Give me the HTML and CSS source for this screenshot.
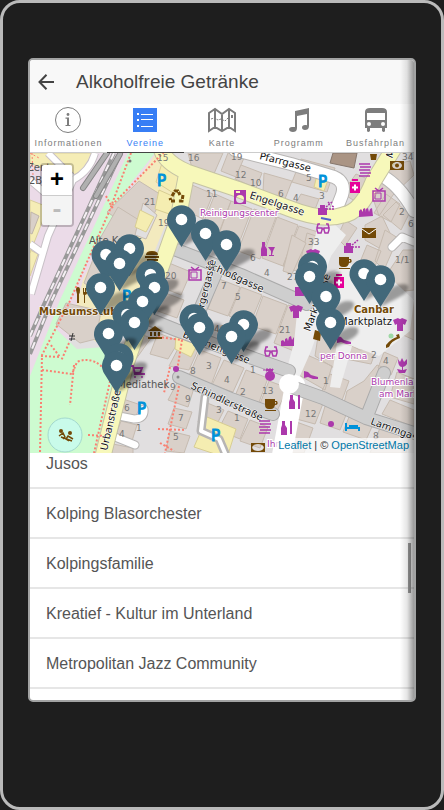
FILE: index.html
```html
<!DOCTYPE html>
<html lang="de">
<head>
<meta charset="utf-8">
<meta name="viewport" content="width=device-width, initial-scale=1">
<title>Alkoholfreie Getränke</title>
<link rel="stylesheet" href="styles.css">
</head>
<body>
<div class="device">
<div class="screen">
<header class="bar">
<button class="back" type="button" aria-label="Zurück"><svg width="16" height="16" viewBox="0 0 16 16"><path d="M8.5 .8L1.5 8l7 7.2M1.5 8H16" fill="none" stroke="#444" stroke-width="2"/></svg></button>
<h1>Alkoholfreie Getränke</h1>
</header>
<nav class="tabs">
<a href="#info"><svg viewBox="0 0 28 28"><circle cx="14" cy="14" r="12.5" fill="none" stroke="currentColor"/><circle cx="14" cy="8.5" r="1.4"/><path d="M11.5 11.5H15V19h1.5v1h-5v-1H13v-6.3h-1.5z"/></svg><span>Informationen</span></a>
<a href="#vereine" class="active"><svg viewBox="0 0 28 28"><path d="M2 2h24v24H2z"/><path d="M6 8h2M6 14h2M6 20h2" stroke="#fff" stroke-width="2"/><path d="M10 8.5h12M10 13.5h12M10 20.5h12" stroke="#fff"/></svg><span>Vereine</span></a>
<a href="#karte"><svg viewBox="0 0 28 28"><path d="M1 7l6-4 7 5 7-5 6 4v18l-6-4-7 4-7-4-6 4zM7 3v18M14 8v17M21 3v18" fill="none" stroke="currentColor" stroke-width="2"/><path d="M3 13l3-1 4 2 3-1 4 2 4-4" fill="none" stroke="currentColor" stroke-dasharray="2 1"/><path d="M23 9h2v3h-2z"/></svg><span>Karte</span></a>
<a href="#programm"><svg viewBox="0 0 28 28"><path d="M10 5l14-3v18c0 3-2 4-4 4-4 0-4-5 0-5 1 0 1.500 0 2 .3V8l-10 2v12c0 3-2 4-4 4-5 0-5-5-1-5h3z"/></svg><span>Programm</span></a>
<a href="#bus"><svg viewBox="0 0 28 28"><path fill-rule="evenodd" d="M8 2h12q5 0 5 4v16h-2v3q-1 2-3 0v-3H8v3q-2 2-3 0v-3H3V6q0-4 5-4zM5 7v7h18V7zM7 16a2 2 0 100 4 2 2 0 000-4zm14 0a2 2 0 100 4 2 2 0 000-4z"/></svg><span>Busfahrplan</span></a>
</nav>
<main>
<section class="map" aria-label="Karte">
<svg class="tiles" viewBox="30 153 384 300" preserveAspectRatio="xMinYMin slice">
<defs>
<filter id="soft" x="-50%" y="-50%" width="200%" height="200%"><feGaussianBlur stdDeviation="1.500"/></filter>
<g id="pin"><path d="M0 27L7 12Q17 1 27 5Q31 11 17 18Z" fill="#000" opacity=".35" filter="url(#soft)"/><path d="M0 27L-12 8A14.500 14.500 0 1 1 12 8Z" fill="#42687a"/><circle cy="-.5" r="5.800" fill="#fff"/></g>
<g id="shirt"><path d="M-7-5l5-2q2 2 4 0l5 2-2 5-2-1v7h-6v-7l-2 1z"/></g>
<g id="cup"><path fill-rule="evenodd" d="M-6-6H4v2h2q2 4-2 4-1 4-4 4h-2q-4 0-4-4zM4-3v2q2-1 1-2zM-6 5H5v1H-6z"/></g>
<g id="tv"><path d="M-6-4H6V6H-6zM-4-7l4 3 4-3" fill="none" stroke="currentColor" stroke-width="1.500"/><path d="M-4-2h6v6h-6z" fill="none" stroke="currentColor"/></g>
<g id="glasses" fill="none" stroke="currentColor" stroke-width="1.500"><path d="M-6 0h5v2l-1 3h-3l-1-3zM1 0h5v2L5 5H2L1 2zM-6 0l1-4h2M6 0L5-4H3M-1 1h2"/></g>
<g id="shoe"><path d="M-7-3l4 1 3 3 7 2v2H2L-3 3-7 4z"/></g>
<g id="bottle"><path d="M-2-7h3v4l2 3v7h-6V0l1-3z"/></g>
<g id="towels" fill="none" stroke="currentColor" stroke-width="1.500"><path d="M-6-6H5M-5-3H6M-6 0H5M-5 3H6M-6 6H5"/></g>
<g id="med"><path d="M-3-7h6v2h-6zM-5-4H5V7H-5z"/><path d="M-3 1.500h6M0-1.500v6" stroke="#fff" stroke-width="2"/></g>
</defs>
<rect x="30" y="153" width="384" height="300" fill="#e1dfe0"/>
<path d="M30 153H160L100 270 30 440z" fill="#ebdbe8"/>
<path d="M30 153h62l-7 16-17 9-38-15z" fill="#f5edb6" stroke="#d8ce9c"/>
<path d="M30 200l18 7-18 46zM30 250l8 4-8 22z" fill="#f5edb6" stroke="#d8ce9c"/>
<path d="M31 212l8 4-7 18-2-1z" fill="#d9d0c9" stroke="#bfb4a9"/>
<path d="M95 153q-5 18-22 27L48 236l-17 58M30 180l28 24M30 244l14 10M48 153l24 24" fill="none" stroke="#c8c1c7" stroke-width="8"/>
<path d="M95 153q-5 18-22 27L48 236l-17 58M30 180l28 24M30 244l14 10M48 153l24 24" fill="none" stroke="#fff" stroke-width="6"/>
<path d="M128 153L60 300 30 376v77h71l24-84-20-22-28 2-21-20 32-69 43-77 24-30z" fill="#cdfbd0"/>
<path d="M121 153L52 300 30 354M114 153L45 302 30 336" fill="none" stroke="#999" stroke-width="4"/>
<path d="M121 153L52 300 30 354M114 153L45 302 30 336" fill="none" stroke="#f4eff3" stroke-width="2" stroke-dasharray="7 6"/>
<path d="M107 153L83 188M120 154l-24 42" stroke="#868686" stroke-width="6" stroke-linecap="round"/>
<path d="M107 153L83 188M120 154l-24 42" stroke="#b0b0b0" stroke-width="4" stroke-linecap="round"/>
<path d="M156 153l-27 40-21 37-25 50-11 44 24 18 20-1 24-54 38-93z" fill="#f3eabe"/>
<g fill="#d9d0c9" stroke="#c6bbb0">
<path d="M139 181l24 15-20 40-36-24z"/><path d="M118 207l24 15-13 33-31-13zM95 254l15 6-18 28-8-5zM56 324l10-21 35 8-5 28-16 4z"/>
<path d="M143 203l14 12-11 24-11-4z" fill="#e1dfe0"/>
<path d="M188 153h35l-10 23-21-8zM228 153h18l-10 24-15-6z"/><path d="M241 165l21 8-6 15-21-9zM264 173l28 8-7 18-22-7zM301 159l34 9-8 24-35-10z"/>
<path d="M192 185l21 9-10 25-18-9zM215 194l16 7-12 33-17-8zM231 201l21 8-16 42-21-8zM254 209l22 8-16 42-22-8zM277 217l21 8-15 41-21-8zM299 226l19 6-14 42-21-8z"/>
<path d="M301 194l18 5-5 13-20-6zM307 233l21 7-10 25-17-6z"/>
<path d="M169 263l22 9-10 23-20-8zM160 291l24 9-7 18-22-8zM219 279l21 8-12 29-20-7zM241 287l21 8-12 29-21-8zM263 296l24 9-11 29-24-8zM288 305l20 7-14 39-20-8z"/>
<path d="M135 332l16 6-15 21-10-5zM158 333l21 8-11 18-18-5zM181 343l17 7-9 20-20-4zM200 350l21 8-11 30-23-8zM224 360l20 8-11 24-21-7zM246 370l22 8-10 27-23-9zM269 381l19 7-12 25-17-7z"/>
<path d="M178 381l16 7-6 19-20-7zM174 408l18 4-6 17-18-5zM170 431l20 5-6 17-18-2zM205 402l19 8-9 18-17-6zM228 411l20 8-8 20-22-9zM250 420l18 7-8 21-20-7z"/>
<path d="M123 399l18 6-7 15-16-3zM121 421l16 4-5 16-17-4zM113 444l20 4v7h-22z"/>
<path d="M356 174l14 6-12 23-16-10zM370 190l11-23 29-6 4 14-21 20-14 21zM374 213l12-19 14 10-9 18zM365 225l17-9 8 17-11 15-14-8zM396 202l13 12-8 16-18-15zM403 250h11v40l-19 2-10-15z"/>
<path d="M292 235l14 8-14 31-9-3zM345 220l12 8-12 18-8-8zM367 245l14 6-9 23-14-7zM385 230l13 8-14 32-9-9z"/>
<path d="M414 300h-12l-10 30 22 10zM319 330l25 12 16 8 17-3-6 17-25-5-4 14-27-17zM305 354l27 12-7 24-28-16zM330 374l19 7-8 22-21-8zM347 391l17-10 13-16 8 3-16 43-25-8zM384 352l14 6-7 17-13-7zM397 372l17 7v25l-24-7zM390 400l24 10v17l-32-13z"/>
<path d="M298 392l26 9-9 23-26-7zM326 403l22 7-8 20-20-7zM351 412l24 8-9 20-23-8zM380 428l29 10-3 15h-36zM291 420l22 8-9 25h-17z"/>
</g>
<path d="M333 153h24l-3 15-24-5z" fill="#aa9484" stroke="#86776d"/>
<path d="M163 160l18 14-3 22-22-14zM159 190l20 9-4 17-20-7zM176 335l22 8-7 14-16-8zM207 417l29 12-9 29-33-11zM317 175l11 5-4 11-10-4zM140 210l14 7-8 15-11-5z" fill="#f5edb1" stroke="#d7cd93"/>
<path d="M300 283l28 19-17 49-15 34-12-6 10-36zM317 229l17-5 12 11-15 21-10 28-16-5zM326 275l24-11 36 10 28 26-4 31-31 25-40-15-18-35zM337 343l15 3-12 42-10-1z" fill="#eee"/>
<g fill="none" stroke-linejoin="round" stroke-linecap="round">
<path d="M235 150l56 14 43 13q12 5 8 18l-7 18M380 175q18 8 34 36M392 247l10-10 12 5M295 385l-13 70M119 416l15 3q11 0 10-10M115 437l20 8M205 397l-4 34 18 8 6 14" stroke="#b7b5b4" stroke-width="9"/>
<path d="M235 150l56 14 43 13q12 5 8 18l-7 18M380 175q18 8 34 36" stroke="#b7b5b4" stroke-width="14"/>
<path d="M235 150l56 14 43 13q12 5 8 18l-7 18M380 175q18 8 34 36" stroke="#fff" stroke-width="12"/><path d="M295 385l-13 70" stroke="#fff" stroke-width="20"/><path d="M392 247l10-10 12 5M119 416l15 3q11 0 10-10M115 437l20 8" stroke="#fff" stroke-width="7"/><path d="M205 397l-4 34 18 8 6 14" stroke="#fff" stroke-width="4"/>
<path d="M174 249l67 26 66 29M136 314l40 16 51 19 62 22M179 377l52 22 42 15M292 387l31 11 43 20 54 17M367 416l17-43M195 321l23-53" stroke="#aaa" stroke-width="14"/>
<path d="M174 249l67 26 66 29M136 314l40 16 51 19 62 22M179 377l52 22 42 15M292 387l31 11 43 20 54 17M367 416l17-43M195 321l23-53" stroke="#cecece" stroke-width="12"/>
<circle cx="289" cy="384" r="10" fill="#fff" stroke="none"/>
<path d="M161 148q3 14 26 24l50 17 51 19q35 14 55 7 18-3 30-33l21-34M187 172l-9 47-18 51-16 42-18 52-24 96" stroke="#c5c3a4" stroke-width="17"/>
<path d="M161 148q3 14 26 24l50 17 51 19q35 14 55 7 18-3 30-33l21-34M187 172l-9 47-18 51-16 42-18 52-24 96" stroke="#f7f8ba" stroke-width="15"/>
</g>
<path d="M131 153l-22 59-40 91-27 52-2 98M106 196l7 13M112 205l53-54M42 370l30 4 5-12q18-8 34 15l-17 76M74 365l-4 40M41 356l19 1-10-13M69 343l-8 18M170 367l-6 26M179 386l-14 67M158 429l28 1M160 443l14 8M158 337l24 3-5 31M88 435l17 1" fill="none" stroke="#fa8072" stroke-width="2" stroke-dasharray="2 2"/>
<circle cx="65" cy="435" r="17" fill="#c9fbea" stroke="#a3d8ce"/>
<path d="M32 153l1 22M30 153l9 5" stroke="#fa8072" stroke-dasharray="2 2"/>
<g class="num">
<text x="157" y="161">15</text><text x="188" y="161">16</text><text x="231" y="160">19</text><text x="235" y="178">12</text><text x="250" y="186">10</text><text x="278" y="197">6</text><text x="206" y="197">11</text><text x="144" y="205">21</text><text x="158" y="226">19</text><text x="250" y="261">6</text><text x="264" y="276">4</text><text x="221" y="289">7</text><text x="235" y="300">5</text><text x="165" y="279">20</text><text x="306" y="181">5</text><text x="319" y="199">3</text><text x="293" y="201">4</text><text x="308" y="245">33</text><text x="287" y="280">27</text><text x="399" y="215">2</text><text x="408" y="227">6</text><text x="395" y="263">1/1</text><text x="402" y="160">34</text><text x="214" y="332">46</text><text x="279" y="333">21</text><text x="206" y="369">3</text><text x="190" y="374">8</text><text x="224" y="383">4</text><text x="250" y="373">1</text><text x="240" y="395">2</text><text x="262" y="394">13</text><text x="185" y="402">9</text><text x="178" y="421">7</text><text x="173" y="440">5</text><text x="216" y="413">3</text><text x="234" y="421">1</text><text x="124" y="411">6</text><text x="119" y="437">4</text><text x="136" y="431">1</text><text x="170" y="390">9</text><text x="305" y="417">12</text><text x="371" y="358">2</text><text x="383" y="364">4</text><text x="323" y="384">1</text><text x="373" y="439">8</text>
</g>
<g class="place">
<text x="27" y="171">Zentrum</text><text x="29" y="184">2B</text><text x="89" y="244">Alte Kelter</text><text x="117" y="388">Mediathek</text>
</g>
<g class="road">
<text transform="translate(259 159) rotate(14)">Pfarrgasse</text><text transform="translate(249 198) rotate(18)">Engelgasse</text><text transform="translate(205 267) rotate(24)">Schloßgasse</text><text transform="translate(182 337) rotate(22)">Brunnengasse</text><text transform="translate(190 388) rotate(25)">Schindlerstraße</text><text transform="translate(370 424) rotate(20)">Lammgasse</text><text transform="translate(107 451) rotate(-77)">Urbanstraße</text><text transform="translate(201 321) rotate(-76)">Bergergasse</text><text transform="translate(310 332) rotate(-70)">Marktstraße</text><text transform="translate(392 159) rotate(-65)">Marktstr.</text><text x="339" y="325">Marktplatz</text>
</g>
<g class="shop"><text x="200" y="216">Reinigungscenter</text><text x="320" y="359">per Donna</text><text x="371" y="385">Blumenlan</text><text x="379" y="397">am Markt</text><text x="267" y="447">Ihr</text></g>
<g class="food"><text x="39" y="315">Museumsstube</text><text x="354" y="313">Canbar</text></g>
<g class="parking"><text x="157" y="186">P</text><text x="318" y="187">P</text><text x="122" y="302">P</text><text x="137" y="414">P</text><text x="211" y="441">P</text></g>
<g fill="#ac39ac" color="#ac39ac">
<path fill-rule="evenodd" d="M234 190h12v14h-12zM236 191v2h4v-2zm4 4a4 4 0 100 8 4 4 0 000-8z"/><use href="#tv" x="195" y="274"/><use href="#tv" x="379" y="195"/><use href="#bottle" x="264" y="249"/><path d="M268 247h7l-2 4-1 4h2v1h-5v-1h2v-4z"/>
<use href="#towels" x="365" y="170"/><use href="#towels" x="265" y="427"/><use href="#glasses" x="323" y="228"/><use href="#glasses" x="271" y="351"/><use href="#shirt" x="296" y="312"/><use href="#shirt" x="400" y="325"/><use href="#shirt" x="313" y="256"/><use href="#shoe" x="344" y="339"/><use href="#shoe" x="311" y="374"/>
<path d="M318 208h9v7h-9zM320 208v-3h5v3M344 246h9v7h-9zM346 246v-3h5v3M359 217v-6l2-2 2 3v-3l2-1 1 4v-3l2-1 1 4 1-3 2-1 1 8zM281 346v-5l2-1 2 2v-3l2-1 1 3 1-4 2-1 1 4 2-3v9zM295 287h9v9h-9z"/>
<path d="M326 207l6-5M326 209l8 0M328 202l2 2M332 206l2 1M352 245l6-5M352 247l8 0" stroke="#ac39ac" stroke-width="1.500" stroke-dasharray="2 1"/>
<circle cx="270" cy="376" r="5"/><path d="M266 369h7v2h-7zM263 370h3" stroke="#ac39ac" stroke-dasharray="2 1"/><circle cx="176" cy="369" r="3"/><circle cx="331" cy="424" r="3"/>
<path d="M130 366h3l2 8h10M133 368h9l-2 5h-6" fill="none" stroke="#ac39ac" stroke-width="2"/><circle cx="135" cy="377" r="1"/><circle cx="142" cy="377" r="1"/>
<use href="#bottle" x="292" y="402"/><path d="M298 395h2v14h-2zM292 421v13h-2v-13z"/><use href="#bottle" x="284" y="428"/>
<path d="M398 359l2 3 2-4 2 4 3-3v5q-2 3-4 3v3l4-1-2 4h-6l-2-4 5 1v-3q-4 0-4-8z"/>
</g>
<g fill="#e6009a"><use href="#med" x="355" y="186"/><use href="#med" x="339" y="281"/></g>
<g fill="#734a08" color="#734a08"><use href="#cup" x="345" y="263"/><use href="#cup" x="271" y="405"/><path d="M370 154h7l-1 6h-5z"/><path fill-rule="evenodd" d="M390 161h14v9h-14zm7 1a5 3.500 0 100 7 5 3.500 0 000-7z"/><circle cx="397" cy="165.500" r="2"/><path d="M362 228h14v10h-14z"/><path d="M362 229l7 5 7-5" fill="none" stroke="#fff"/>
<path fill-rule="evenodd" d="M251 443h14v9h-14zm7 1a5 3 0 100 7 5 3 0 000-7z"/><path d="M146 255q0-4 6-4t6 4zM145 256h14v2h-14zM147 259h11v2h-11z"/><path d="M148 331l7-5 7 5zM150 332h2v4h-2zM154 332h2v4h-2zM158 332h2v4h-2zM148 337h14v2h-14z"/>
<path d="M76 290q0-3 2-3t2 3-1 4v9h-2v-9zM83 288v5q0 2 1 2v8h1v-8q3 0 3-7h-1v4h-1v-4h-1v4h-1v-4z"/><path d="M315 330l6 2-1 9-7-2z"/><path d="M386 345q6-7 11-8l-1-2 3-1 1 4q-9 3-11 9l-3 1z"/>
<path d="M172 196l3-5h3l2 4M183 195l-1 6h-4M175 201h-4l-1-3" fill="none" stroke="#734a08" stroke-width="3" stroke-dasharray="4 1"/>
<circle cx="61" cy="431" r="2"/><circle cx="70" cy="433" r="2"/><path d="M59 436l4-3 2 4-2 2M73 439l-5-3-2 3 3 2M61 437l11 4" stroke="#734a08" stroke-width="1.500" fill="none"/></g>
<circle cx="178" cy="377" r="1.500" fill="#888"/><circle cx="130" cy="161" r="1.500" fill="#777"/><circle cx="391" cy="336" r="2.500" fill="#9ed8a4"/>
<path d="M321 218l10 2" stroke="#5064ce" stroke-width="2"/><path d="M346 423v8M347 428h12v3M349 426h9" fill="none" stroke="#0092da" stroke-width="2"/>
<path d="M69 336h6M69 339h6M73 333l-2 8" stroke="#333" fill="none"/>
<use href="#pin" x="181.500" y="220"/><use href="#pin" x="205.500" y="234"/><use href="#pin" x="226.500" y="245"/><use href="#pin" x="106" y="255"/><use href="#pin" x="129.500" y="249"/><use href="#pin" x="119.500" y="264"/><use href="#pin" x="312.500" y="267"/><use href="#pin" x="364" y="274"/><use href="#pin" x="150.500" y="275"/><use href="#pin" x="309.500" y="277"/><use href="#pin" x="380.500" y="280"/><use href="#pin" x="100.500" y="288"/><use href="#pin" x="154.500" y="288"/><use href="#pin" x="326" y="297"/><use href="#pin" x="142.500" y="302"/><use href="#pin" x="127" y="315"/><use href="#pin" x="194" y="319"/><use href="#pin" x="134.500" y="323"/><use href="#pin" x="330.500" y="323"/><use href="#pin" x="243.500" y="325"/><use href="#pin" x="199.500" y="328"/><use href="#pin" x="108.500" y="334"/><use href="#pin" x="231.500" y="337"/><use href="#pin" x="119" y="358"/><use href="#pin" x="116.500" y="366"/>
</svg>
<div class="zoom"><button type="button" aria-label="Vergrößern">+</button><button type="button" disabled aria-label="Verkleinern">-</button></div>
<p class="credit"><a href="#leaflet">Leaflet</a> | © <a href="#osm">OpenStreetMap</a></p>
</section>
<section class="list">
<ul><li>Jusos</li><li>Kolping Blasorchester</li><li>Kolpingsfamilie</li><li>Kreatief - Kultur im Unterland</li><li>Metropolitan Jazz Community</li></ul>
<span class="thumb"></span>
</section>
</main>
</div>
</div>
</body>
</html>
```
FILE: styles.css
```css
* { box-sizing: border-box; }
body { margin: 0; background: #1e1e1e; font-family: "Liberation Sans", Arial, sans-serif; }
.device { display: flex; flex-direction: column; min-height: 100vh; padding: 55px 25px 105px; border: 3px solid #bababa; border-radius: 20px; background: #1e1e1e; }
.screen { position: relative; flex: 1; display: flex; flex-direction: column; border: 2px solid #a2a3a3; border-radius: 5px; overflow: hidden; background: #fff; }
.screen::after { content: ""; position: absolute; z-index: 2; top: 0; right: 0; bottom: 0; width: 14px; background: linear-gradient(to right, transparent, rgba(0, 0, 0, .1) 50%, rgba(0, 0, 0, .4)); pointer-events: none; }
.bar { display: flex; align-items: center; gap: 22px; height: 44px; padding-left: 8px; background: #f8f8f8; }
.back { display: flex; padding: 0; border: 0; background: none; }
h1 { margin: 0; font-size: 19px; line-height: 24px; font-weight: 400; color: #444; }
.tabs { display: grid; grid-template-columns: repeat(5, 1fr); height: 49px; border-bottom: 1px solid #ccc; }
.tabs a { display: flex; flex-direction: column; align-items: center; margin-bottom: -1px; padding-top: 2px; color: #7d7d7d; text-decoration: none; font-size: 9px; line-height: 18px; letter-spacing: 1px; border-bottom: 2px solid transparent; }
.tabs svg { width: 28px; height: 28px; fill: currentColor; }
.tabs .active { color: #387ef5; border-color: #444; }
main { flex: 1; display: flex; flex-direction: column; }
.map { position: relative; height: 300px; overflow: hidden; background: #ddd; }
.tiles { display: block; width: 100%; height: 100%; font-family: "DejaVu Sans", sans-serif; }
.num { font-size: 9px; fill: #777; }
.place { font-size: 10px; fill: #555; }
.road { font-size: 10px; fill: #111; stroke: #fff; stroke-width: 1px; paint-order: stroke; }
.shop { font-size: 9px; fill: #ac39ac; stroke: #fff; stroke-width: 2px; paint-order: stroke; }
.food { font-size: 10px; font-weight: 700; fill: #734a08; stroke: #fff; stroke-width: 1px; paint-order: stroke; }
.parking { font-size: 15px; fill: #0092da; stroke: #0092da; stroke-width: 1px; }
.zoom { position: absolute; left: 10px; top: 10px; display: flex; flex-direction: column; border: 2px solid rgba(0, 0, 0, .2); border-radius: 4px; overflow: hidden; background-clip: padding-box; }
.zoom button { width: 30px; height: 30px; padding: 0; border: 0; background: #fff; color: #000; font: bold 24px "Liberation Mono", monospace; }
.zoom button:disabled { border-top: 1px solid #ccc; background: #f4f4f4; color: #bbb; }
.credit { position: absolute; right: 0; bottom: 0; margin: 0; padding: 0 5px 0 3px; background: rgba(255, 255, 255, .7); font-size: 11px; line-height: 15px; color: #333; }
.credit a { color: #0078a8; text-decoration: none; }
.list { position: relative; flex: 1; overflow: hidden; }
ul { margin: -14px 0 0; padding: 0; list-style: none; }
li { height: 50px; padding-left: 16px; border-bottom: 2px solid #e6e6e6; font-size: 16px; line-height: 50px; color: #555; }
.thumb { position: absolute; top: 90px; right: 3px; width: 3px; height: 50px; background: #999; }
```
